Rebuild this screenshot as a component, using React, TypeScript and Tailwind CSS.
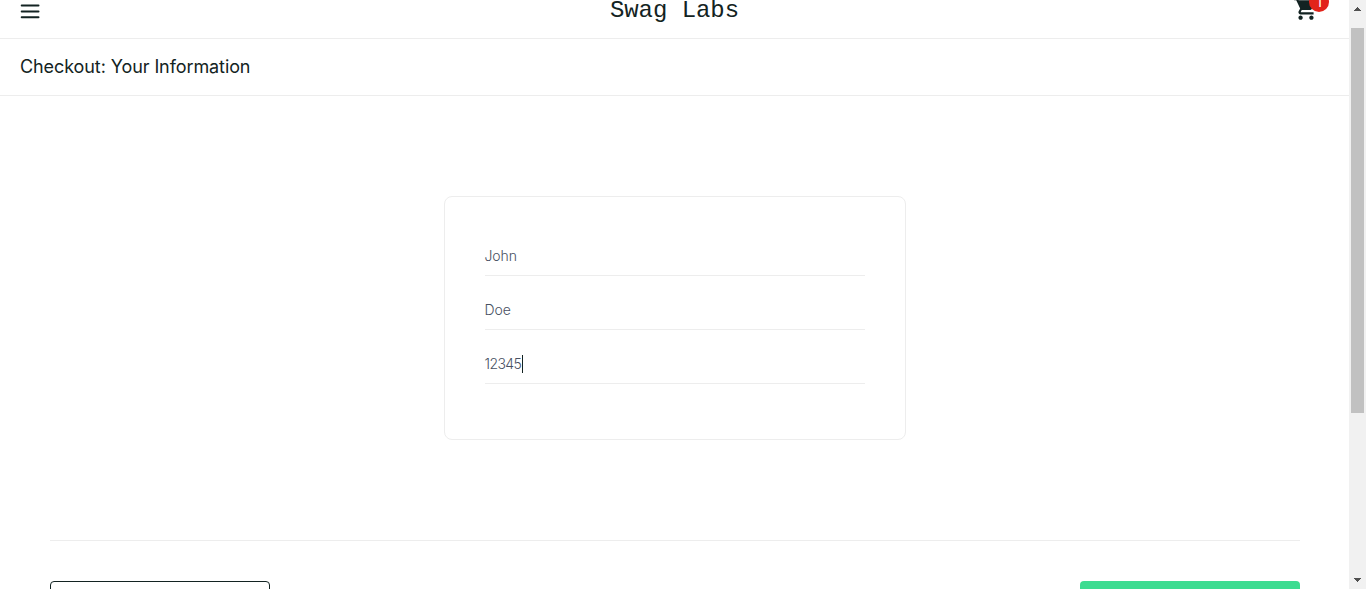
import React from 'react';
import { MdShoppingCart } from 'react-icons/md';

function Header() {
  return (
    <header className="flex h-[39px] shrink-0 items-start justify-between border-b border-[#ededed] px-5">
      <button aria-label="Open Menu" className="mt-[1px] w-[60px]">
        <svg width="20" height="20" viewBox="0 0 20 20" fill="none" stroke="#132322" strokeWidth="2">
          <path d="M1.7 4.5h16.8M1.7 10.4h16.8M1.7 16.3h16.8" strokeLinecap="round" />
        </svg>
      </button>
      <div className="-mt-[5px] font-['Liberation_Mono',monospace] text-[24px] leading-8 tracking-[-0.05px] text-[#132322]">
        Swag Labs
      </div>
      <div className="flex w-[60px] justify-end">
        <div className="relative -mt-1 mr-[10px] size-[26px]">
          <MdShoppingCart className="size-[26px] text-[#132322]" />
          <span className="absolute -top-1 left-4 flex size-5 items-center justify-center rounded-full bg-[#e2231a] font-['Inter',sans-serif] text-[14px] leading-5 text-white">
            1
          </span>
        </div>
      </div>
    </header>
  );
}

function Field({ children }: { children: React.ReactNode }) {
  return (
    <div className="flex h-[39px] items-center border-b border-[#ededed] text-[14px] font-light leading-5 text-[#485062]">
      {children}
    </div>
  );
}

function Scrollbar() {
  return (
    <aside className="flex w-[17px] shrink-0 flex-col items-center bg-[#f1f1f1]">
      <svg width="17" height="28" viewBox="0 0 17 28" fill="#505050" shapeRendering="crispEdges">
        <path d="M5 11 8.5 7 12 11z" />
      </svg>
      <div className="h-[385px] w-[13px] bg-[#c1c1c1]" />
      <svg className="mt-auto" width="17" height="17" viewBox="0 0 17 17" fill="#505050" shapeRendering="crispEdges">
        <path d="M5 6h7L8.5 10z" />
      </svg>
    </aside>
  );
}

export default function App() {
  return (
    <div className="flex h-[589px] w-[1366px] overflow-hidden bg-white font-['Inter',sans-serif] text-[#132322]">
      <main className="flex w-[1349px] flex-col overflow-hidden">
        <Header />
        <div className="flex h-[57px] shrink-0 items-center border-b border-[#ededed] px-5">
          <h1 className="text-[18px] leading-6 tracking-[-0.09px]">Checkout: Your Information</h1>
        </div>
        <form className="mt-[100px] flex h-[244px] w-[462px] shrink-0 flex-col gap-[15px] self-center rounded-[8px] border border-[#ededed] px-10 pt-10">
          <Field>
            <span className="tracking-[-0.1px]">John</span>
          </Field>
          <Field>
            <span>Doe</span>
          </Field>
          <Field>
            <span className="w-[37px] tracking-[-0.6px]">12345</span>
            <span className="h-[18px] w-px bg-[#132322]" />
          </Field>
        </form>
        <footer className="ml-[50px] mr-[49px] mt-[100px] flex h-[90px] shrink-0 justify-between border-t border-[#ededed] pt-10">
          <button aria-label="Cancel" className="h-[50px] w-[220px] rounded-[4px] border border-[#132322]" />
          <button aria-label="Continue" className="h-[50px] w-[220px] rounded-[4px] bg-[#3ddc91]" />
        </footer>
      </main>
      <Scrollbar />
    </div>
  );
}
